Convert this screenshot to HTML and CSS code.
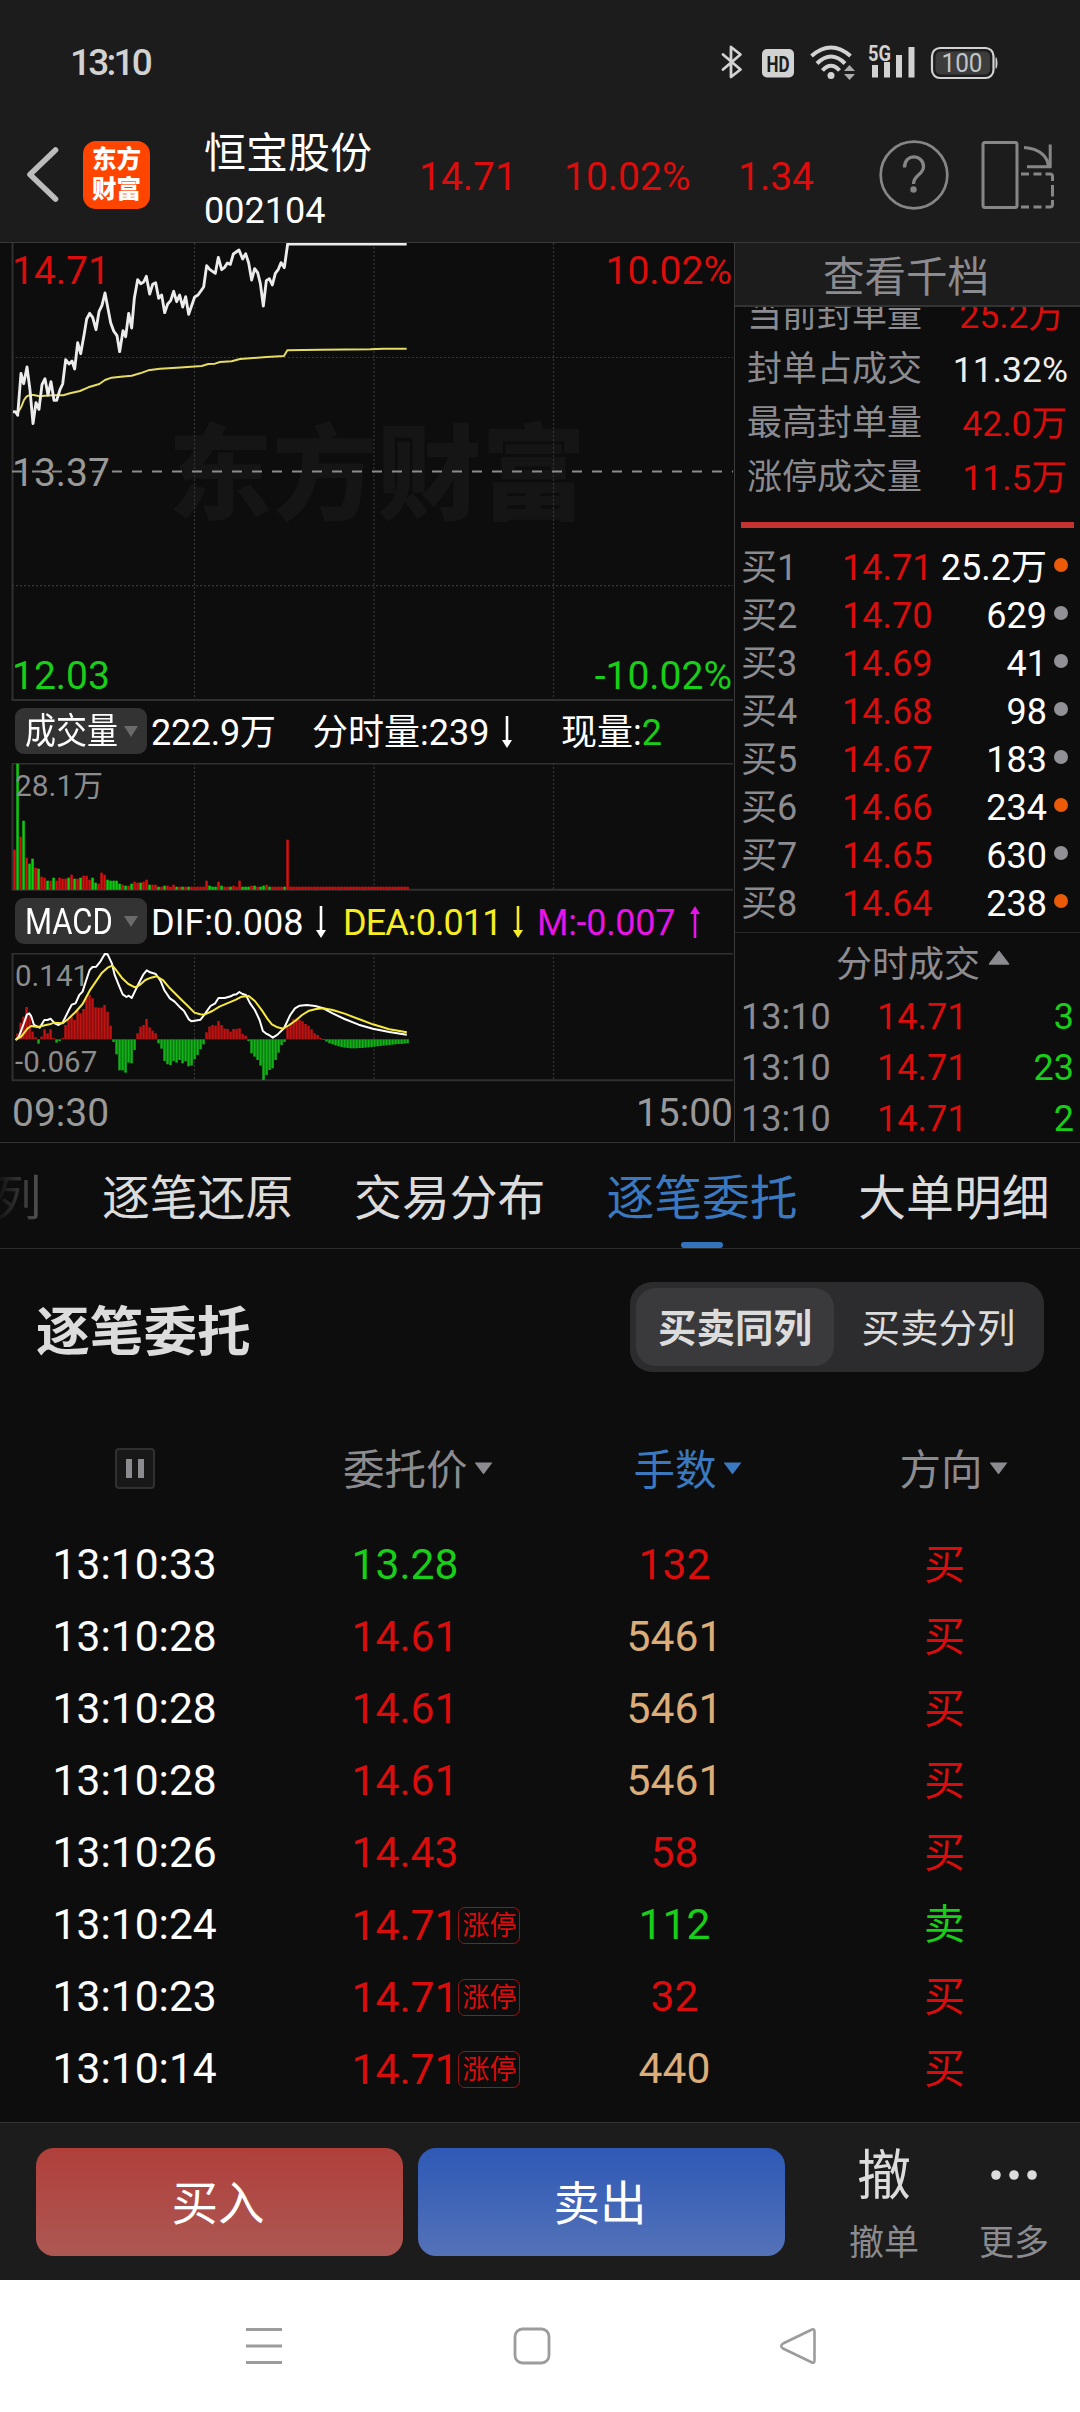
FILE: index.html
```html
<!DOCTYPE html>
<html lang="zh-CN">
<head>
<meta charset="utf-8">
<title>恒宝股份 002104</title>
<link rel="stylesheet" href="styles.css">
</head>
<body>
<div class="screen">

  <div class="status">
    <span class="clock">13:10</span>
    <div class="status-icons">
      <svg class="bt" width="22" height="36" viewBox="0 0 22 36" fill="none" stroke="#d2d2d2" stroke-width="2.8" stroke-linejoin="round" stroke-linecap="round"><path d="M2 10.500L19.500 25.500L10 33V3L19.500 10.500L2 25.500"/></svg>
      <svg class="hd" width="32" height="30" viewBox="0 0 32 30"><rect y="1" width="32" height="28.500" rx="5" fill="#d2d2d2"/><text x="16" y="23.500" text-anchor="middle" textLength="23" lengthAdjust="spacingAndGlyphs" font-size="22.500" font-weight="700" fill="#1c1c1c">HD</text></svg>
      <svg class="wifi" width="46" height="36" viewBox="0 0 46 36" fill="none" stroke="#d2d2d2" stroke-width="4"><path d="M1.500 12Q21 -5 40.500 12"/><path d="M7 19.500Q21 5.500 35 19.500"/><path d="M12.500 26.500Q21 17 29.500 26.500"/><circle cx="21" cy="31.500" r="3.500" fill="#d2d2d2" stroke="none"/><path d="M34 27l5.500-6 5.500 6zM34 30h11l-5.500 6z" fill="#aaa" stroke="none"/></svg>
      <svg class="cell" width="48" height="34" viewBox="0 0 48 34"><text x="0" y="17" textLength="23" lengthAdjust="spacingAndGlyphs" font-size="22" font-weight="700" fill="#d2d2d2">5G</text><path d="M4 21h6v12.500h-6zM16 18h6v15.500h-6zM28 11h6v22.500h-6zM40.500 3h6v30.500h-6z" fill="#d2d2d2"/></svg>
      <svg class="batt" width="68" height="32" viewBox="0 0 68 32"><rect x="1" y="1" width="61.500" height="30" rx="8" fill="none" stroke="#d2d2d2" stroke-width="2.200"/><rect x="4.500" y="4.500" width="54.500" height="23" rx="5" fill="#3c3c3c"/><path d="M64.500 10.500h1q2 5.500 0 11h-1z" fill="#d2d2d2"/><text x="31" y="25" text-anchor="middle" textLength="41" lengthAdjust="spacingAndGlyphs" font-size="25" fill="#c4c4c4">100</text></svg>
    </div>
  </div>

  <header class="header">
    <svg width="83" height="67" viewBox="0 0 83 67" fill="none" stroke="#bcbcbc" stroke-width="5.600" stroke-linecap="round" stroke-linejoin="round"><path d="M55.500 9L30 33.500L55.500 58"/></svg>
    <div class="logo"><span>东方</span><span>财富</span></div>
    <div class="stock"><span class="stock-name">恒宝股份</span><span class="stock-code">002104</span></div>
    <span class="quote">14.71</span>
    <span class="quote">10.02%</span>
    <span class="quote">1.34</span>
    <svg width="70" height="70" viewBox="0 0 70 70" fill="none" stroke="#868686" stroke-width="2.700"><circle cx="35" cy="35" r="33.300"/><path d="M25.500 27.500C25.500 12.500 44.500 14.500 44.500 26.500C44.500 35 34.500 34.500 34.500 44" stroke-width="3.300"/><circle cx="34.500" cy="49.500" r="3.200" fill="#868686" stroke="none"/></svg>
    <svg width="74" height="68" viewBox="0 0 74 68" fill="none" stroke="#868686" stroke-width="3"><rect x="2" y="1.500" width="34" height="65" rx="2"/><path d="M43 6.500Q66 8.500 67.500 26M69.200 3.500V26.500M46 25.800H70.500"/><path d="M40 33h8M52.500 33h8M64.500 33H69q2.500 0 2.500 2.500V40M71.500 44v11.500M71.500 59v4.500q0 2.500-2.500 2.500h-4.500M60.500 66h-8M48 66h-8"/></svg>
  </header>

  <main class="market">
    <section class="charts">
      <svg class="price-chart" width="734" height="459" viewBox="0 243 734 459">
        <text class="watermark" x="168" y="512" textLength="418" lengthAdjust="spacingAndGlyphs">东方财富</text>
        <g class="frame"><path d="M12.500 243V700H733"/></g>
        <g class="dots"><path d="M12 357.500H733M12 585.700H733M194.500 243V700M374 243V700M553.500 243V700"/></g>
        <path d="M12 471.500H733" stroke="#8c8c8c" stroke-width="1.800" stroke-dasharray="10 10"/>
        <g transform="translate(0 235) scale(.33333)" fill="none" stroke-linejoin="round">
          <path stroke="#e6dc64" stroke-width="6" d="M45 530L55 530L64 515L72 495L80 484L92 479L105 481L118 484L135 482L160 481L190 481L210 475L240 468L265 457L298 447L315 435L335 428L362 425L395 422L420 415L445 406L480 401L530 398L605 393L625 387L645 386L660 381L695 379L720 372L760 369L800 366L852 363L862 346L960 344L1110 343L1150 341L1220 341"/>
          <path stroke="#ececec" stroke-width="8.600" d="M39 530L47 531L53 541L63 415L71 446L81 396L90 465L99 566L108 503L117 523L126 449L135 431L144 480L153 440L162 496L170 496L180 464L188 447L197 374L207 387L216 378L224 402L233 323L242 356L253 295L260 252L269 235L278 247L288 284L297 230L306 211L315 174L332 263L341 288L351 302L359 350L369 287L377 305L386 235L395 279L403 190L413 134L422 146L431 141L439 124L449 177L458 148L467 143L476 190L485 180L494 233L503 207L512 197L521 169L530 200L539 180L548 216L557 185L566 238L584 186L594 180L611 156L620 92L629 103L646 115L655 67L665 104L673 98L682 84L691 88L700 57L717 45L728 72L737 56L746 84L755 135L764 101L773 113L781 145L790 213L799 137L808 131L817 150L826 115L835 103L843 83L853 98L863 27L1220 27"/>
        </g>
        <g class="label-lg">
          <text class="up" x="12" y="284">14.71</text><text class="up" x="732" y="284" text-anchor="end">10.02%</text>
          <text x="12" y="485.700">13.37</text>
          <text class="down" x="12" y="688.500">12.03</text><text class="down" x="732" y="688.500" text-anchor="end">-10.02%</text>
        </g>
      </svg>

      <div class="indicator">
        <div class="picker"><span>成交量</span><i class="caret"></i></div>
        <span class="v1">222.9万</span>
        <span class="v2">分时量:239<svg class="arrow" width="12" height="34" viewBox="0 0 12 34"><path d="M4.700 1h2.600v24h3.700l-5 8-5-8h3.700z" fill="#fff"/></svg></span>
        <span>现量:<b class="down-text">2</b></span>
      </div>

      <svg class="volume-chart" width="734" height="129" viewBox="0 763 734 129">
        <g class="frame"><path d="M733 763.500H12.500V889.700H733"/></g>
        <g class="dots"><path d="M194.500 763V889M374 763V889M553.500 763V889"/></g>
        <g id="volume-bars"></g>
        <text class="label-sm" x="15" y="796" textLength="88" lengthAdjust="spacingAndGlyphs">28.1万</text>
      </svg>

      <div class="indicator macd-row">
        <div class="picker"><span>MACD</span><i class="caret"></i></div>
        <span class="m1">DIF:0.008<svg class="arrow" width="12" height="34" viewBox="0 0 12 34"><path d="M4.700 1h2.600v24h3.700l-5 8-5-8h3.700z" fill="#fff"/></svg></span>
        <span class="m2">DEA:0.011<svg class="arrow" width="12" height="34" viewBox="0 0 12 34"><path d="M4.700 1h2.600v24h3.700l-5 8-5-8h3.700z" fill="#f8ec22"/></svg></span>
        <span class="m3">M:-0.007<svg class="arrow" width="12" height="34" viewBox="0 0 12 34"><path d="M6 1l5 8H7.300v24H4.700V9H1z" fill="#e614e6"/></svg></span>
      </div>

      <svg class="macd-chart" width="734" height="130" viewBox="0 953 734 130">
        <g class="frame"><path d="M733 953.500H12.500V1080.300H733"/></g>
        <g class="dots"><path d="M194.500 953V1080M374 953V1080M553.500 953V1080"/></g>
        <g class="label-sm"><text x="15" y="986">0.141</text><text x="15" y="1072">-0.067</text></g>
        <g id="macd-bars"></g>
        <g transform="translate(0 890) scale(.47194 .33333)" fill="none" stroke-linejoin="round">
          <path class="thin" stroke="#fff" d="M33 450L40 440L50 402L57 374L62 370L66 378L72 405L84 413L94 390L101 390L107 386L116 400L124 405L133 397L146 360L152 344L160 340L168 315L175 305L181 278L190 240L196 231L204 230L213 214L222 192L228 193L237 220L243 255L253 290L260 313L268 321L273 317L279 324L292 286L304 253L311 241L318 247L330 252L340 272L348 300L360 325L370 335L380 350L390 363L400 388L406 394L425 389L435 370L446 348L456 340L463 324L476 324L489 319L495 314L501 313L507 306L514 312L521 315L530 340L540 360L550 390L557 423L563 430L570 435L578 443L588 434L602 414L615 375L625 355L635 347L650 345L668 348L685 355L705 370L730 387L760 404L790 416L825 426L862 434"/>
          <path class="thin" stroke="#f5e93d" d="M33 450L45 440L58 416L66 408L80 411L95 406L105 403L115 398L133 400L145 386L160 366L175 342L190 302L203 275L215 250L228 233L238 227L246 240L258 263L272 282L286 292L296 285L308 270L320 263L332 259L345 270L360 295L380 323L398 348L412 368L424 373L433 374L450 363L465 350L480 341L500 329L512 320L527 318L540 333L555 361L566 385L576 403L588 412L600 416L613 405L628 390L640 375L655 362L670 357L685 355L705 360L730 371L760 387L790 403L825 418L862 427"/>
        </g>
      </svg>
      <div class="axis"><span>09:30</span><span>15:00</span></div>
    </section>

    <aside class="book">
      <div class="book-title">查看千档</div>
      <div class="limits">
        <div class="limit"><span>当前封单量</span><b class="up-text first">25.2万</b></div>
        <div class="limit"><span>封单占成交</span><b class="light">11.32%</b></div>
        <div class="limit"><span>最高封单量</span><b class="up-text">42.0万</b></div>
        <div class="limit"><span>涨停成交量</span><b class="up-text">11.5万</b></div>
      </div>
      <div class="redbar"></div>
      <div class="bids">
        <div class="bid"><span>买1</span><b>14.71</b><em>25.2万</em><i class="hot"></i></div>
        <div class="bid"><span>买2</span><b>14.70</b><em>629</em><i></i></div>
        <div class="bid"><span>买3</span><b>14.69</b><em>41</em><i></i></div>
        <div class="bid"><span>买4</span><b>14.68</b><em>98</em><i></i></div>
        <div class="bid"><span>买5</span><b>14.67</b><em>183</em><i></i></div>
        <div class="bid"><span>买6</span><b>14.66</b><em>234</em><i class="hot"></i></div>
        <div class="bid"><span>买7</span><b>14.65</b><em>630</em><i></i></div>
        <div class="bid"><span>买8</span><b>14.64</b><em>238</em><i class="hot"></i></div>
      </div>
      <div class="ticks-title">分时成交<svg width="22" height="16" viewBox="0 0 22 16"><path d="M11 1.500L20.500 14H1.500Z" fill="#8b8b90" stroke="#8b8b90" stroke-width="1.500" stroke-linejoin="round"/></svg></div>
      <div class="tick"><span>13:10</span><b>14.71</b><em>3</em></div>
      <div class="tick"><span>13:10</span><b>14.71</b><em>23</em></div>
      <div class="tick"><span>13:10</span><b>14.71</b><em>2</em></div>
    </aside>
  </main>

  <nav class="tabs">
    <span class="tab cut">列</span><span class="tab">逐笔还原</span><span class="tab">交易分布</span><span class="tab active">逐笔委托</span><span class="tab">大单明细</span>
  </nav>

  <section class="orders">
    <div class="orders-head">
      <h2>逐笔委托</h2>
      <div class="segment"><span class="on">买卖同列</span><span>买卖分列</span></div>
    </div>
    <div class="row thead">
      <div class="pause"><i></i><i></i></div>
      <div class="sort">委托价<i></i></div>
      <div class="sort blue">手数<i></i></div>
      <div class="sort">方向<i></i></div>
    </div>
    <div class="row"><span>13:10:33</span><span class="down-text">13.28</span><span class="qty up-text">132</span><span class="dir up-text">买</span></div>
    <div class="row"><span>13:10:28</span><span class="up-text">14.61</span><span class="qty big">5461</span><span class="dir up-text">买</span></div>
    <div class="row"><span>13:10:28</span><span class="up-text">14.61</span><span class="qty big">5461</span><span class="dir up-text">买</span></div>
    <div class="row"><span>13:10:28</span><span class="up-text">14.61</span><span class="qty big">5461</span><span class="dir up-text">买</span></div>
    <div class="row"><span>13:10:26</span><span class="up-text">14.43</span><span class="qty up-text">58</span><span class="dir up-text">买</span></div>
    <div class="row"><span>13:10:24</span><span class="up-text cell-price">14.71<small>涨停</small></span><span class="qty down-text">112</span><span class="dir down-text">卖</span></div>
    <div class="row"><span>13:10:23</span><span class="up-text cell-price">14.71<small>涨停</small></span><span class="qty up-text">32</span><span class="dir up-text">买</span></div>
    <div class="row"><span>13:10:14</span><span class="up-text cell-price">14.71<small>涨停</small></span><span class="qty big">440</span><span class="dir up-text">买</span></div>
  </section>

  <footer class="trade">
    <button class="btn buy">买入</button>
    <button class="btn sell">卖出</button>
    <div class="action"><span class="action-icon">撤</span><span class="action-label">撤单</span></div>
    <div class="action"><span class="action-icon"><svg width="48" height="12" viewBox="0 0 48 12" fill="#dcdcdc"><circle cx="6" cy="6" r="4.800"/><circle cx="24" cy="6" r="4.800"/><circle cx="42" cy="6" r="4.800"/></svg></span><span class="action-label">更多</span></div>
  </footer>

  <div class="sysnav">
    <svg width="36" height="38" viewBox="0 0 36 38" stroke="#9c9c9c" stroke-width="3"><path d="M0 2.500H36M0 19H36M0 35.500H36"/></svg>
    <svg width="38" height="38" viewBox="0 0 38 38" fill="none" stroke="#9c9c9c" stroke-width="2.800"><rect x="2" y="2" width="34" height="34" rx="7.500"/></svg>
    <svg width="38" height="38" viewBox="0 0 38 38" fill="none" stroke="#9c9c9c" stroke-width="2.600" stroke-linejoin="round"><path d="M32 3Q35.500 1 35.500 4.500V33.500Q35.500 37 32 35L4 21.500Q0.500 19 4 16.500Z"/></svg>
  </div>
</div>
<script src="charts.js"></script>
</body>
</html>
```

FILE: styles.css
```css
* { box-sizing: border-box; }
body { margin: 0; background: #0d0d0d; color: #fff; font-family: Roboto, "Noto Sans CJK SC", sans-serif; }
.screen { width: 1080px; height: 2412px; display: flex; flex-direction: column; overflow: hidden; }
b, em, i, small { font-weight: 400; font-style: normal; }
svg { display: block; flex: none; }
span, b, em { white-space: nowrap; }
.up-text { color: #da0c0c; }
.down-text { color: #18ce18; }

/* status bar */
.status { height: 108px; background: #1c1c1c; display: flex; justify-content: space-between; padding: 0 81px 0 70px; }
.status svg { overflow: visible; }
.clock { font-size: 37px; font-weight: 500; line-height: 126px; color: #d2d2d2; letter-spacing: -2.8px; }
.status-icons { display: flex; align-items: flex-start; padding-top: 44px; }
.bt { margin-right: 19px; }
.hd { margin: 4px 16px 0 0; }
.wifi { margin-right: 12px; }
.cell { margin-right: 15px; }
.batt { margin-top: 3px; }

/* header */
.header { height: 135px; background: #1c1c1c; border-bottom: 1px solid #383838; display: grid; grid-template-columns: 83px 121px 215px 145px 174px 141px 102px 99px; align-items: center; }
.logo { width: 67px; height: 68px; border-radius: 13px; background: #ff4500; display: flex; flex-direction: column; align-items: center; justify-content: center; font-size: 24.5px; font-weight: 900; line-height: 30px; }
.stock { display: flex; flex-direction: column; padding-top: 15px; }
.stock-name { font-size: 42px; line-height: 58px; }
.stock-code { font-size: 36px; line-height: 56px; }
.quote { font-size: 39px; line-height: 46px; color: #da0c0c; padding-top: 5px; }

/* charts */
.market { height: 900px; display: flex; border-bottom: 1px solid #333; }
.charts { width: 735px; border-right: 1px solid #3a3a3a; display: flex; flex-direction: column; flex: none; }
.frame { fill: none; stroke: #303030; stroke-width: 2; }
.dots { fill: none; stroke: #363636; stroke-width: 1.2; stroke-dasharray: 2 2; }
.watermark { font-size: 104px; font-weight: 900; fill: #151515; }
.label-lg { font-size: 39px; fill: #999; }
.label-sm { font-size: 29.5px; fill: #8c8c8c; }
.up { fill: #da0c0c; }
.down { fill: #18ce18; }
.thin { stroke-width: 2; vector-effect: non-scaling-stroke; }
.indicator { height: 61px; padding: 0 0 2px 15px; display: flex; align-items: center; flex: none; font-size: 36px; line-height: 46px; }
.indicator > span { display: flex; align-items: center; padding-top: 4px; }
.picker { width: 132px; height: 46px; border-radius: 9px; background: #333; display: flex; align-items: center; justify-content: space-between; padding: 0 9px 0 10px; margin-right: 4px; flex: none; }
.picker span { width: 90px; padding-top: 2px; transform: scaleX(.86); transform-origin: left; }
.caret { width: 14px; height: 11px; background: #6a6a6a; clip-path: polygon(0 0, 100% 0, 50% 100%); }
.arrow { margin: -3px 0 0 12px; }
.v1 { width: 161px; letter-spacing: -.3px; }
.v2 { width: 249px; }
.macd-row .picker span { padding-top: 1px; }
.m1 { width: 192px; }
.m2 { width: 194px; color: #f8ec22; letter-spacing: -.9px; }
.m3 { color: #e614e6; letter-spacing: -.3px; }
.m1 .arrow { margin-left: 12px; }
.m2 .arrow { margin-left: 10px; }
.m3 .arrow { margin-left: 14px; }
.axis { display: flex; justify-content: space-between; height: 59px; font-size: 39px; line-height: 61px; color: #999; padding: 0 1px 0 12px; }

/* order book */
.book { flex: 1; display: flex; flex-direction: column; color: #8b8b90; font-size: 36px; }
.book-title { height: 64px; background: #1c1c1c; border-bottom: 2px solid #333; font-size: 41.5px; line-height: 69px; padding-left: 88px; flex: none; }
.limits { height: 215px; overflow: hidden; display: flex; flex-direction: column; padding: 36px 13px 0 12px; flex: none; }
.limit { height: 54px; line-height: 54px; display: flex; justify-content: space-between; flex: none; font-size: 35px; }
.limit b { font-size: 35.5px; }
.limit:first-child { margin-top: -54px; }
.limit .first { margin-right: 3px; }
.limit .light { color: #eee; margin-right: -1px; }
.redbar { height: 6px; margin: 0 6px 16px 6px; background: #c43232; flex: none; }
.bid { height: 48px; line-height: 48px; display: grid; grid-template-columns: 101px 88px 117px 1fr; padding-left: 6px; align-items: center; }
.bid b, .tick b { color: #da0c0c; }
.bid em { color: #fff; text-align: right; }
.bid i { width: 14px; height: 14px; border-radius: 7px; background: #909096; margin: -5px 0 0 7px; }
.bid .hot { background: #ea5a08; }
.ticks-title { height: 60px; border-top: 1px solid #2a2a2a; margin-top: 4px; display: flex; align-items: center; padding: 0 0 2px 101px; gap: 8px; flex: none; }
.ticks-title svg { margin-top: -6px; }
.tick { height: 51px; line-height: 51px; display: grid; grid-template-columns: 136px 100px 1fr; padding: 0 6px 0 6px; }
.tick em { color: #18ce18; text-align: right; }

/* tabs */
.tabs { height: 106px; border-bottom: 1px solid #2c2c2c; display: flex; gap: 60.5px; padding-left: 102px; font-size: 47.8px; line-height: 112px; color: #dcdcdc; }
.tab { width: 191.6px; flex: none; }
.cut { width: 48px; margin-left: -108.5px; background: linear-gradient(90deg, #0d0d0d, #555); background-clip: text; color: transparent; }
.active { color: #3a78bf; display: flex; flex-direction: column; align-items: center; }
.active::after { content: ""; width: 42px; height: 6px; margin-top: -13px; border-radius: 3px; background: #3474bf; }

/* order list */
.orders { height: 874px; }
.orders-head { height: 158px; padding: 0 36px; display: flex; justify-content: space-between; align-items: center; }
h2 { margin: 0; font-size: 53.7px; font-weight: 700; color: #dcdcdc; }
.segment { width: 414px; height: 90px; margin-top: -1px; border-radius: 22px; background: #2c2c2e; padding: 6px; display: grid; grid-template-columns: 198px 1fr; font-size: 38.5px; line-height: 82px; text-align: center; color: #dcdcdc; }
.segment .on { background: #3a3a3c; border-radius: 20px; font-weight: 700; height: 78px; }
.segment span + span { padding-left: 5px; }
.row { height: 72px; line-height: 72px; font-size: 42.6px; display: grid; grid-template-columns: 299px 273px 200px 200px; padding-left: 52.5px; }
.thead { height: 121px; align-items: center; grid-template-columns: 290.5px 290.5px 266px 200px; color: #8b8b90; font-size: 41.5px; }
.pause { width: 40px; height: 41px; border: 2px solid #303030; border-radius: 4px; background: #181818; margin: 2px 0 0 62px; display: flex; justify-content: center; align-items: center; gap: 6px; }
.pause i { width: 6px; height: 19px; background: #8b8b90; }
.sort { display: flex; align-items: center; gap: 7px; padding-top: 8px; }
.sort i { width: 18px; height: 12px; margin-top: -6px; background: currentColor; clip-path: polygon(0 0, 100% 0, 50% 100%); }
.blue { color: #3a78bf; }
.qty { text-align: center; width: 100px; }
.big { color: #dcad78; }
.dir { font-size: 41px; line-height: 74px; margin-left: 99.5px; }
.cell-price { display: flex; align-items: center; }
small { width: 62px; height: 37px; border: 1.5px solid #981414; border-radius: 7px; font-size: 27px; line-height: 36px; text-align: center; margin: 2px 0 0 0; }

/* trade bar */
.trade { height: 158px; background: #1c1c1c; border-top: 1px solid #333; display: flex; padding: 25px 0 0 36px; }
.btn { width: 367px; height: 108px; border: 0; border-radius: 18px; margin-right: 15px; padding: 4px 3px 0 0; font: 46.500px/104px Roboto, "Noto Sans CJK SC", sans-serif; color: #fff; }
.buy { background: linear-gradient(#b03f3a, #ad5854); }
.sell { background: linear-gradient(#2e59b6, #5472b8); }
.action { width: 130px; margin-left: 19px; display: flex; flex-direction: column; align-items: center; }
.action + .action { margin-left: 0; }
.action-icon { height: 69px; line-height: 58px; font-size: 54px; color: #dcdcdc; }
.action-icon svg { margin-top: 21px; }
.action-label { font-size: 35px; line-height: 53px; color: #8b8b90; }

/* system navigation */
.sysnav { height: 132px; background: #fff; display: grid; grid-template-columns: 267px 266px 1fr; padding: 47px 0 0 246px; }
```

FILE: charts.js
```js
var NS = "http://www.w3.org/2000/svg";
var RED = "#d41010", GREEN = "#10cc10";

function bar(group, i, top, bottom, color) {
  var r = document.createElementNS(NS, "rect");
  r.setAttribute("x", (13.3 + i * 3).toFixed(2));
  r.setAttribute("y", top.toFixed(2));
  r.setAttribute("width", 2.5);
  r.setAttribute("height", (bottom - top).toFixed(2));
  r.setAttribute("fill", color);
  group.appendChild(r);
}

/* per-minute volume: r = rise, g = fall */
var volume = ("r40 g126 r53 g69 r32 g26 g31 r22 g21 r13 r12 g9 r9 g12 r9 r12 r11 r11 g12 r15 g11 r11 g12 r14 r14 r10 g12 g7 r6 r17 r15 g10 g9 g9 g9 g6 r5 g4 r4 g6 r8 r7 g7 r8 r10 g5 r5 r5 g3 r3 g4 r4 r3 r5 g3 r3 g3 r3 g3 r3 r3 r3 r3 r3 r9 g4 g3 g3 r8 g4 r3 r3 g3 r4 r3 r9 g3 g3 g3 r4 g4 r3 g3 g4 r5 g3 r3 r3 r3 r3 g3 r50").split(" ");
while (volume.length < 132) volume.push("r3");
var vg = document.getElementById("volume-bars");
volume.forEach(function (v, i) {
  bar(vg, i, 889.7 - Number(v.slice(1)), 889.7, v[0] === "r" ? RED : GREEN);
});

/* MACD histogram, in thirds of a pixel around the zero line */
var macd = [0,18,50,68,97,73,23,6,-13,8,30,18,30,4,-10,-5,4,43,58,68,58,86,78,91,123,133,123,96,95,95,103,83,41,-8,-45,-93,-93,-100,-70,-72,-32,18,38,43,61,36,26,18,-12,-28,-65,-75,-77,-65,-70,-62,-72,-66,-81,-79,-60,-47,-30,-15,21,38,43,41,55,43,32,31,23,31,31,33,16,11,-5,-42,-52,-62,-79,-122,-107,-92,-87,-62,-40,-17,-8,36,48,61,63,58,54,46,40,30,18,13,4,-2,-7,-12,-15,-18,-21,-23,-25,-26,-27,-27,-27,-26,-26,-25,-24,-23,-22,-21,-20,-19,-18,-17,-16,-15,-14,-14,-13,-12];
var mg = document.getElementById("macd-bars");
macd.forEach(function (m, i) {
  var end = 1039.3 - m / 3;
  bar(mg, i, Math.min(1039.3, end), Math.max(1039.3, end), m >= 0 ? "#c01212" : "#12b218");
});
```
